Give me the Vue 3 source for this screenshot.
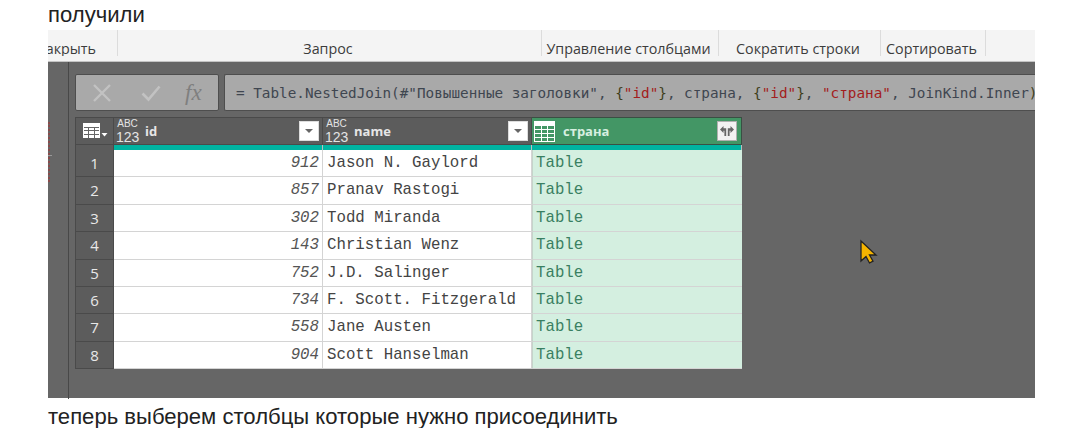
<script setup>
const rows = [
  { id: 912, name: 'Jason N. Gaylord' },
  { id: 857, name: 'Pranav Rastogi' },
  { id: 302, name: 'Todd Miranda' },
  { id: 143, name: 'Christian Wenz' },
  { id: 752, name: 'J.D. Salinger' },
  { id: 734, name: 'F. Scott. Fitzgerald' },
  { id: 558, name: 'Jane Austen' },
  { id: 904, name: 'Scott Hanselman' }
];
</script>

<template>
  <div class="page">
    <p class="line line-top">получили</p>

    <div class="shot">
      <div class="ribbon">
        <div class="group group-close"><span class="close-label">Закрыть</span></div>
        <div class="group group-query">Запрос</div>
        <div class="group group-cols">Управление столбцами</div>
        <div class="group group-rows">Сократить строки</div>
        <div class="group group-sort">Сортировать</div>
      </div>

      <div class="editor">
        <div class="side">
          <i class="side-marks"></i>
          <i class="side-tick"></i>
        </div>

        <div class="main">
          <div class="formula">
            <div class="formula-btns">
              <svg class="btn-x" width="20" height="20" viewBox="0 0 20 20">
                <path d="M2 2 18 18M18 2 2 18" fill="none" stroke="#c2c2c2" stroke-width="2.4" />
              </svg>
              <svg class="btn-check" width="20" height="20" viewBox="0 0 20 20">
                <path d="M1.500 10.500 7.500 16.500 18.500 3.500" fill="none" stroke="#c2c2c2" stroke-width="2.6" />
              </svg>
              <span class="btn-fx">fx</span>
            </div>
            <div class="formula-input">= Table.NestedJoin(#"Повышенные заголовки", <b class="brace">{</b><b class="str">"id"</b><b class="brace">}</b>, страна, <b class="brace">{</b><b class="str">"id"</b><b class="brace">}</b>, <b class="str">"страна"</b>, JoinKind.Inner<b class="brace">)</b></div>
          </div>

          <div class="table">
            <div class="head">
              <div class="corner">
                <svg width="26" height="16" viewBox="0 0 26 16">
                  <path d="M0 0h17v15H0z" fill="#fff" />
                  <path d="M1 4.500h15M1 7.500h15M1 11.500h15M5.500 4v11M11.500 4v11" stroke="#666" fill="none" />
                  <path d="M18.500 10h6l-3 3.500z" fill="#fff" />
                </svg>
              </div>
              <div class="hcell">
                <span class="type"><span class="abc">ABC</span><span class="num">123</span></span>
                <span class="hname">id</span>
                <span class="filter"><i></i></span>
              </div>
              <div class="hcell">
                <span class="type"><span class="abc">ABC</span><span class="num">123</span></span>
                <span class="hname">name</span>
                <span class="filter"><i></i></span>
              </div>
              <div class="hcell hcell-green">
                <span class="tbl-icon">
                  <i v-for="n in 12" :key="n"></i>
                </span>
                <span class="hname">страна</span>
                <span class="expand">
                  <svg width="16" height="12" viewBox="0 0 16 12">
                    <path d="M1 4.500 4.500 1v2.300H7.200V11H5.400V5.700H4.500V8z" fill="#666" />
                    <path d="M15 4.500 11.500 1v2.300H8.800V11h1.800V5.700h.9V8z" fill="#666" />
                  </svg>
                </span>
              </div>
            </div>

            <div class="quality">
              <i class="q-blank"></i>
              <i class="q-bar"></i>
              <i class="q-bar"></i>
              <i class="q-bar"></i>
            </div>

            <div v-for="(row, i) in rows" :key="row.id" class="row">
              <div class="rownum">{{ i + 1 }}</div>
              <div class="cell cell-id">{{ row.id }}</div>
              <div class="cell">{{ row.name }}</div>
              <div class="cell cell-table">Table</div>
            </div>
          </div>
        </div>

        <svg class="cursor" width="20" height="26" viewBox="0 0 20 26">
          <path d="M2 2v20l5-4.500 3.500 6.500 3.500-1.800-3.500-6.200H17z" fill="#f5b400" stroke="#222" stroke-width="1.300" />
        </svg>
      </div>
    </div>

    <p class="line line-bottom">теперь выберем столбцы которые нужно присоединить</p>
  </div>
</template>

<style>
html, body {
  margin: 0;
  background: #fff;
}
</style>

<style scoped>
.page {
  width: 1069px;
  height: 428px;
  overflow: hidden;
  background: #fff;
  font-family: "Liberation Sans", Arial, sans-serif;
  color: #222;
}

.line {
  margin: 0 0 0 48px;
  font-size: 22.080px;
  white-space: nowrap;
}

.line-top {
  height: 30px;
  line-height: 30px;
}

.line-bottom {
  height: 30px;
  line-height: 38px;
}

.shot {
  width: 987px;
  height: 368px;
  margin-left: 48px;
  background: #666;
}

.ribbon {
  display: flex;
  height: 30px;
  padding-bottom: 1px;
  background: #f4f4f4;
  border-bottom: 1px solid #c4c4c4;
  font-family: "Open Sans", "Noto Sans", sans-serif;
  font-size: 14.300px;
  color: #3c3c3c;
}

.group {
  box-sizing: border-box;
  height: 26px;
  padding: 10px 3px 0 0;
  line-height: 18px;
  border-right: 1px solid #dcdcdc;
  white-space: nowrap;
  text-align: center;
}

.group-close {
  position: relative;
  width: 70px;
  overflow: hidden;
  padding: 0;
}

/* the first letter is cut by the edge of the screenshot */
.close-label {
  position: absolute;
  right: 21px;
  top: 10px;
  clip-path: inset(0 0 0 9px);
}

.group-query {
  width: 424px;
}

.group-cols {
  width: 177px;
}

.group-rows {
  width: 162px;
}

.group-sort {
  width: 105px;
}

.editor {
  position: relative;
  display: flex;
  height: 337px;
}

.side {
  position: relative;
  box-sizing: border-box;
  width: 21px;
  border-right: 1px solid #484848;
  flex-shrink: 0;
}

.side-marks {
  position: absolute;
  left: 0;
  top: 60px;
  height: 60px;
  border-left: 2px dotted #8a4a4a;
}

.side-tick {
  position: absolute;
  left: 0;
  top: 93px;
  width: 4px;
  height: 1px;
  background: #999;
}

.main {
  flex: 1;
  min-width: 0;
  padding: 12px 0 0 6px;
  overflow: hidden;
}

.formula {
  display: flex;
  gap: 5px;
  height: 37px;
}

.formula-btns {
  box-sizing: border-box;
  display: flex;
  align-items: center;
  width: 144px;
  flex-shrink: 0;
  padding-left: 16px;
  background: #a9a9a9;
  border: 1px solid #4e4e4e;
  border-radius: 2px;
}

.btn-check {
  margin-left: 29px;
}

.btn-fx {
  margin-left: 24px;
  font-family: "Liberation Serif", serif;
  font-style: italic;
  font-size: 23px;
  line-height: 1;
  color: #7f7f7f;
}

.formula-input {
  box-sizing: border-box;
  flex: 1;
  min-width: 0;
  padding-left: 11px;
  background: #a9a9a9;
  border: 1px solid #4e4e4e;
  border-right: 0;
  border-radius: 2px 0 0 2px;
  font-family: "DejaVu Sans Mono", monospace;
  font-size: 14.320px;
  line-height: 37px;
  color: #3f4650;
  white-space: nowrap;
  overflow: hidden;
}

.brace {
  font-weight: normal;
  color: #3f3f1c;
}

.str {
  font-weight: normal;
  color: #a31d1d;
}

.table {
  width: 668px;
  margin-top: 6px;
}

.head {
  display: grid;
  grid-template-columns: 39px 209px 209px 210px;
  height: 28px;
}

.corner,
.hcell {
  box-sizing: border-box;
  display: flex;
  align-items: center;
  background: #5c5c5c;
  border: 1px solid #4a4a4a;
  border-left: 0;
}

.corner {
  justify-content: center;
  border-left: 1px solid #4a4a4a;
  padding-left: 2px;
}

.hcell {
  padding: 0 3px 0 2px;
}

.hcell-green {
  background: #439665;
  border-color: #3a4f43;
  padding: 0 4px 0 2px;
}

.type {
  display: flex;
  flex-direction: column;
  width: 23px;
  flex-shrink: 0;
  font-family: "Liberation Sans", sans-serif;
  color: #e4e4e4;
  text-align: center;
}

.abc {
  font-size: 10px;
  line-height: 11.500px;
}

.num {
  font-size: 14px;
  line-height: 14.500px;
}

.hname {
  flex: 1;
  margin-left: 6px;
  font-family: "Open Sans", sans-serif;
  font-size: 13px;
  font-weight: 700;
  color: #e6e6e6;
}

.hcell-green .hname {
  margin-left: 8px;
  color: #d6efe0;
}

.filter,
.expand {
  box-sizing: border-box;
  display: flex;
  align-items: center;
  justify-content: center;
  width: 20px;
  height: 20px;
  background: #fff;
  border: 1px solid #ddd;
  flex-shrink: 0;
}

.filter i {
  width: 0;
  height: 0;
  border-left: 4px solid transparent;
  border-right: 4px solid transparent;
  border-top: 4px solid #666;
}

.expand {
  background: #f2f2f2;
  border: 1px solid #b0b0b0;
}

.tbl-icon {
  box-sizing: border-box;
  display: grid;
  grid-template-columns: repeat(3, 1fr);
  grid-template-rows: repeat(4, 1fr);
  gap: 1px;
  width: 21px;
  height: 21px;
  padding: 1px;
  padding-top: 5px;
  background: #fff;
  flex-shrink: 0;
}

.tbl-icon i {
  background: #439665;
}

.quality {
  display: grid;
  grid-template-columns: 39px 209px 209px 210px;
  height: 5px;
}

.q-blank {
  background: #5c5c5c;
  border-left: 1px solid #4a4a4a;
  border-right: 1px solid #4a4a4a;
  box-sizing: border-box;
}

.q-bar {
  background: #00b3a1;
  border-right: 1px solid #bdbdbd;
}

.row {
  display: grid;
  grid-template-columns: 39px 209px 209px 210px;
  height: 27.400px;
  font-family: "Liberation Mono", monospace;
  font-size: 15.750px;
  color: #444;
}

.rownum {
  box-sizing: border-box;
  background: #5c5c5c;
  border: 1px solid #4a4a4a;
  border-top: 0;
  font-family: "Open Sans", sans-serif;
  font-size: 15px;
  line-height: 26px;
  color: #e8e8e8;
  text-align: center;
}

.cell {
  box-sizing: border-box;
  padding-left: 4px;
  background: #fff;
  border-right: 1px solid #d4d4d4;
  border-bottom: 1px solid #d4d4d4;
  line-height: 26px;
  white-space: nowrap;
}

.cell-id {
  padding: 0 3px 0 0;
  font-style: italic;
  text-align: right;
  color: #555;
}

.cell-table {
  background: #d4efe0;
  color: #3a7f62;
  border-right: 0;
  border-left: 1px solid #c4d4ca;
  padding-left: 3px;
}

.cursor {
  position: absolute;
  left: 811px;
  top: 177px;
}
</style>
